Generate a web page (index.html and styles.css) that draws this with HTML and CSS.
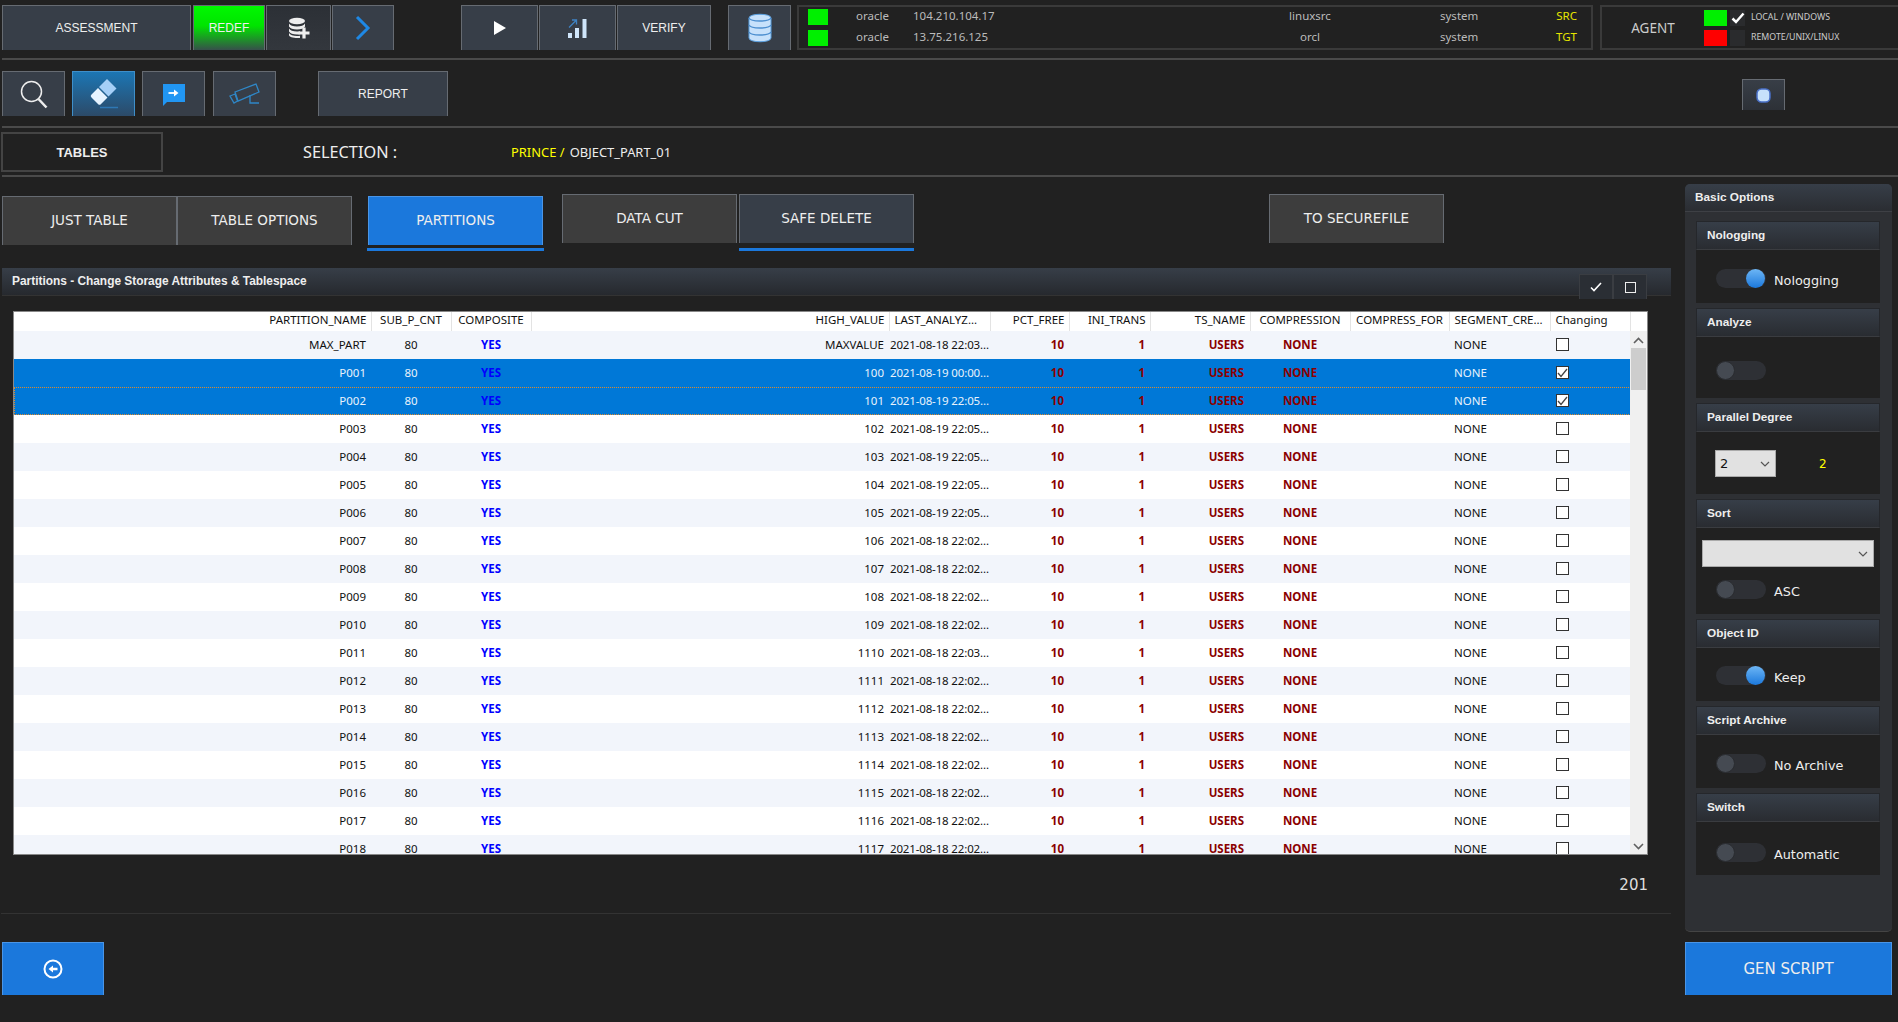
FILE: index.html
```html
<!DOCTYPE html>
<html lang="en">
<head>
    <meta charset="UTF-8">
    <meta name="viewport" content="width=device-width, initial-scale=1.0">
    <title>Redef - Partitions</title>
    <link rel="stylesheet" href="styles.css">
</head>
<body>
    <!-- top toolbar -->
    <div class="toolbar top-bar">
        <button class="tool w-assess">ASSESSMENT</button>
        <button class="tool tool-green w-redef">REDEF</button>
        <button class="tool tool-dark w-db">
            <svg width="22" height="22" viewBox="0 0 22 22">
                <ellipse cx="9" cy="4" rx="8" ry="3.2" fill="#eee"/>
                <path d="M1 6.5c1 2 4 3 8 3s7-1 8-3v3c-1 2-4 3-8 3s-7-1-8-3z" fill="#eee"/>
                <path d="M1 11.5c1 2 4 3 8 3 1 0 2 0 3-.2v3c-1 .2-2 .2-3 .2-4 0-7-1-8-3z" fill="#eee"/>
                <path d="M1 16c1 2 4 3 8 3 1 0 2 0 3-.2V21c-6 .5-11-1-11-3z" fill="#eee"/>
                <path d="M16 10.500v11M10.500 16h11" stroke="#eee" stroke-width="3.200"/>
            </svg>
        </button>
        <button class="tool w-next">
            <svg width="16" height="26" viewBox="0 0 16 26"><path d="M2 2l11 11L2 24" fill="none" stroke="#1e88e5" stroke-width="3"/></svg>
        </button>
        <button class="tool w-play gap-run">
            <svg width="14" height="14" viewBox="0 0 14 14"><path d="M1 0l12 7-12 7z" fill="#fff"/></svg>
        </button>
        <button class="tool w-play">
            <svg width="21" height="20" viewBox="0 0 21 20">
                <path d="M1 15h4v5H1zM8 10h4v10H8zM15.500 1h4v19h-4z" fill="#cfe5fa"/>
                <path d="M2 9.500l7-7M5 2h4.500v4.500" fill="none" stroke="#3f83c4" stroke-width="1.300"/>
            </svg>
        </button>
        <button class="tool w-verify">VERIFY</button>
        <button class="tool w-dbbig gap-db">
            <svg width="24" height="30" viewBox="0 0 24 30">
                <path d="M1 5c0-5 22-5 22 0v20c0 5-22 5-22 0z" fill="#c7e1fb" stroke="#5aa0e0"/>
                <path d="M1 5c2 4 20 4 22 0M1 12c2 4 20 4 22 0M1 19c2 4 20 4 22 0" fill="none" stroke="#4d8fd0" stroke-width="1.500"/>
            </svg>
        </button>

        <div class="conn-panel">
            <div class="conn-row">
                <span class="led led-green"></span>
                <span class="c-type">oracle</span>
                <span class="c-ip">104.210.104.17</span>
                <span class="c-sid">linuxsrc</span>
                <span class="c-user">system</span>
                <span class="c-tag">SRC</span>
            </div>
            <div class="conn-row">
                <span class="led led-green"></span>
                <span class="c-type">oracle</span>
                <span class="c-ip">13.75.216.125</span>
                <span class="c-sid">orcl</span>
                <span class="c-user">system</span>
                <span class="c-tag">TGT</span>
            </div>
        </div>

        <div class="agent-panel">
            <span class="agent-title">AGENT</span>
            <div class="agent-rows">
                <div class="agent-row">
                    <span class="agent-led led-green"></span>
                    <span class="agent-check">
                        <svg width="14" height="12" viewBox="0 0 14 12"><path d="M1.500 6.500l3.500 3.500L12.500 1.500" fill="none" stroke="#fff" stroke-width="2.500"/></svg>
                    </span>
                    <span class="agent-label">LOCAL / WINDOWS</span>
                </div>
                <div class="agent-row">
                    <span class="agent-led led-red"></span>
                    <span class="agent-check"></span>
                    <span class="agent-label">REMOTE/UNIX/LINUX</span>
                </div>
            </div>
        </div>
    </div>
    <div class="sep sep-top"></div>

    <!-- second toolbar -->
    <div class="toolbar second-bar">
        <button class="tool w-icon">
            <svg width="28" height="29" viewBox="0 0 28 29">
                <circle cx="11.500" cy="11.500" r="10" fill="none" stroke="#eee" stroke-width="1.500"/>
                <path d="M18.500 19l8 8.500" stroke="#eee" stroke-width="2.500"/>
            </svg>
        </button>
        <button class="tool tool-active w-icon gap-s">
            <svg width="30" height="32" viewBox="0 0 30 32">
                <path d="M18 1l9.500 9.500-8 8L10 9z" fill="#a5cff7"/>
                <path d="M9 10l9.500 9.500-6.500 6.500a2 2 0 0 1-3 0L2.500 19.500a2 2 0 0 1 0-3z" fill="#e6f3ff"/>
                <path d="M11 29.500h18" stroke="#2e78b5" stroke-width="1.500"/>
            </svg>
        </button>
        <button class="tool w-icon gap-s">
            <svg width="23" height="23" viewBox="0 0 23 23">
                <path d="M1 1h22v18H5l-4 4z" fill="#2196f3"/>
                <path d="M6.500 10h7" stroke="#fff" stroke-width="1.800"/>
                <path d="M12 6.500l4.500 3.500-4.500 3.500z" fill="#fff"/>
            </svg>
        </button>
        <button class="tool w-icon gap-m">
            <svg width="31" height="23" viewBox="0 0 31 23" fill="none" stroke="#2f87c7" stroke-width="1.300">
                <path d="M6 9L27 1l3 8-21 9z"/>
                <path d="M1 13l5-2 2.500 7-3.500 2z"/>
                <path d="M21 12v8h9"/>
            </svg>
        </button>
        <button class="tool w-report gap-report">REPORT</button>
        <button class="tool w-small">
            <svg width="15" height="15" viewBox="0 0 15 15"><rect x="1" y="1" width="13" height="13" rx="4.500" fill="#c7e1fb" stroke="#4a70c8" stroke-width="1.500"/></svg>
        </button>
    </div>
    <div class="sep sep-second"></div>

    <div class="selection-row">
        <div class="tables-box">TABLES</div>
        <span class="selection-label">SELECTION :</span>
        <span class="selection-path"><span class="owner">PRINCE /</span> OBJECT_PART_01</span>
    </div>
    <div class="sep sep-third"></div>

    <div class="main">
        <div class="content">
            <div class="tabs">
                <div class="tab-group">
                    <button class="tab">JUST TABLE</button>
                    <button class="tab">TABLE OPTIONS</button>
                </div>
                <div class="tab-group tab-group-low">
                    <div class="tab-col">
                        <button class="tab tab-on">PARTITIONS</button>
                        <div class="tab-line tab-line-wide"></div>
                    </div>
                </div>
                <button class="tab tab-up tab-cut">DATA CUT</button>
                <div class="tab-col tab-col-safe">
                    <button class="tab tab-up tab-slate">SAFE DELETE</button>
                    <div class="tab-line"></div>
                </div>
                <button class="tab tab-up tab-secure">TO SECUREFILE</button>
            </div>

            <div class="panel-head">
                <span class="panel-title">Partitions - Change Storage Attributes &amp; Tablespace</span>
                <div class="panel-btns">
                    <button class="mini-btn">
                        <svg width="12" height="10" viewBox="0 0 12 10"><path d="M1 5.500l3 3L11 1" fill="none" stroke="#fff" stroke-width="1.600"/></svg>
                    </button>
                    <button class="mini-btn"><span class="mini-box"></span></button>
                </div>
            </div>

            <div class="grid-wrap">
                <table class="grid">
                    <colgroup>
                        <col class="c357"><col class="c80"><col class="c80"><col class="c358"><col class="c101"><col class="c79"><col class="c81"><col class="c100"><col class="c100"><col class="c99"><col class="c101"><col class="c80"><col class="c17">
                    </colgroup>
                    <thead>
                        <tr>
                            <th class="right">PARTITION_NAME</th>
                            <th>SUB_P_CNT</th>
                            <th>COMPOSITE</th>
                            <th class="right">HIGH_VALUE</th>
                            <th class="left">LAST_ANALYZ...</th>
                            <th class="right">PCT_FREE</th>
                            <th class="right">INI_TRANS</th>
                            <th class="right">TS_NAME</th>
                            <th>COMPRESSION</th>
                            <th>COMPRESS_FOR</th>
                            <th class="left">SEGMENT_CRE...</th>
                            <th class="left">Changing</th>
                            <th class="no-line"></th>
                        </tr>
                    </thead>
                    <tbody id="gridBody"></tbody>
                </table>
                <div class="scrollbar">
                    <svg class="arrow" width="11" height="7" viewBox="0 0 11 7"><path d="M1 6l4.500-4.500L10 6" fill="none" stroke="#606060" stroke-width="1.600"/></svg>
                    <div class="thumb"></div>
                    <svg class="arrow arrow-down" width="11" height="7" viewBox="0 0 11 7"><path d="M1 1l4.500 4.500L10 1" fill="none" stroke="#606060" stroke-width="1.600"/></svg>
                </div>
            </div>

            <div class="count">201</div>
            <div class="foot-line"></div>
            <button class="action back-btn">
                <svg width="20" height="20" viewBox="0 0 20 20">
                    <circle cx="10" cy="10" r="8.500" fill="none" stroke="#fff" stroke-width="2"/>
                    <path d="M5.500 10L10 6.500v2.300h4.500v2.400H10v2.300z" fill="#fff"/>
                </svg>
            </button>
        </div>

        <div class="side">
            <div class="side-panel">
                <div class="side-head">Basic Options</div>
                <div class="sections">
                    <div class="section">
                        <div class="sec-head">Nologging</div>
                        <div class="sec-body">
                            <div class="switch-row"><span class="toggle on"><i></i></span><span class="switch-text">Nologging</span></div>
                        </div>
                    </div>
                    <div class="section">
                        <div class="sec-head">Analyze</div>
                        <div class="sec-body body-analyze">
                            <div class="switch-row"><span class="toggle"><i></i></span></div>
                        </div>
                    </div>
                    <div class="section">
                        <div class="sec-head">Parallel Degree</div>
                        <div class="sec-body body-degree">
                            <div class="degree-row">
                                <div class="select select-small">2
                                    <svg width="10" height="6" viewBox="0 0 10 6"><path d="M1 1l4 4 4-4" fill="none" stroke="#555" stroke-width="1.200"/></svg>
                                </div>
                                <span class="degree-val">2</span>
                            </div>
                        </div>
                    </div>
                    <div class="section">
                        <div class="sec-head">Sort</div>
                        <div class="sec-body body-sort">
                            <div class="select select-wide">
                                <svg width="10" height="6" viewBox="0 0 10 6"><path d="M1 1l4 4 4-4" fill="none" stroke="#555" stroke-width="1.200"/></svg>
                            </div>
                            <div class="switch-row"><span class="toggle"><i></i></span><span class="switch-text">ASC</span></div>
                        </div>
                    </div>
                    <div class="section">
                        <div class="sec-head">Object ID</div>
                        <div class="sec-body body-object">
                            <div class="switch-row"><span class="toggle on"><i></i></span><span class="switch-text">Keep</span></div>
                        </div>
                    </div>
                    <div class="section">
                        <div class="sec-head">Script Archive</div>
                        <div class="sec-body">
                            <div class="switch-row"><span class="toggle"><i></i></span><span class="switch-text">No Archive</span></div>
                        </div>
                    </div>
                    <div class="section">
                        <div class="sec-head">Switch</div>
                        <div class="sec-body body-switch">
                            <div class="switch-row"><span class="toggle"><i></i></span><span class="switch-text">Automatic</span></div>
                        </div>
                    </div>
                </div>
            </div>
            <button class="action gen-btn">GEN SCRIPT</button>
        </div>
    </div>

    <script>
        const rows = [
            ['MAX_PART', 'MAXVALUE', '2021-08-18 22:03...'],
            ['P001', '100', '2021-08-19 00:00...'],
            ['P002', '101', '2021-08-19 22:05...'],
            ['P003', '102', '2021-08-19 22:05...'],
            ['P004', '103', '2021-08-19 22:05...'],
            ['P005', '104', '2021-08-19 22:05...'],
            ['P006', '105', '2021-08-19 22:05...'],
            ['P007', '106', '2021-08-18 22:02...'],
            ['P008', '107', '2021-08-18 22:02...'],
            ['P009', '108', '2021-08-18 22:02...'],
            ['P010', '109', '2021-08-18 22:02...'],
            ['P011', '1110', '2021-08-18 22:03...'],
            ['P012', '1111', '2021-08-18 22:02...'],
            ['P013', '1112', '2021-08-18 22:02...'],
            ['P014', '1113', '2021-08-18 22:02...'],
            ['P015', '1114', '2021-08-18 22:02...'],
            ['P016', '1115', '2021-08-18 22:02...'],
            ['P017', '1116', '2021-08-18 22:02...'],
            ['P018', '1117', '2021-08-18 22:02...']
        ];

        const checkMark = '<svg width="11" height="10" viewBox="0 0 11 10"><path d="M1 5l3 3.500L10 1" fill="none" stroke="#444" stroke-width="1.300"/></svg>';

        document.getElementById('gridBody').innerHTML = rows.map((row, index) => {
            const selected = index === 1 || index === 2;
            const cls = (selected ? 'sel ' : '') + (index === 2 ? 'focus ' : '') + (index % 2 === 0 ? 'alt' : '');
            return `
                <tr class="${cls}">
                    <td class="right name">${row[0]}</td>
                    <td>80</td>
                    <td class="yes">YES</td>
                    <td class="right">${row[1]}</td>
                    <td class="date">${row[2]}</td>
                    <td class="right red">10</td>
                    <td class="right red">1</td>
                    <td class="right red ts">USERS</td>
                    <td class="red">NONE</td>
                    <td></td>
                    <td class="left">NONE</td>
                    <td class="left"><span class="check">${selected ? checkMark : ''}</span></td>
                    <td class="filler"></td>
                </tr>`;
        }).join('');
    </script>
</body>
</html>
```

FILE: styles.css
```css
:root {
    --bg: #212121;
    --slate: #373e48;
    --line: #4a4a4a;
    --blue: #1b78dc;
    --edge: #666b72;
}

* {
    margin: 0;
    padding: 0;
    box-sizing: border-box;
}

html, body {
    height: 1022px;
    overflow: hidden;
}

body {
    background: var(--bg);
    color: #eee;
    font-family: "Liberation Sans", Arial, sans-serif;
    font-size: 12px;
}

button {
    font-family: inherit;
    color: inherit;
    cursor: pointer;
}

/* toolbars */
.toolbar {
    display: flex;
    height: 45px;
}

.top-bar {
    margin-top: 5px;
    padding-left: 2px;
}

.second-bar {
    margin-top: 11px;
    padding-left: 2px;
}

.tool {
    height: 45px;
    display: flex;
    align-items: center;
    justify-content: center;
    font-size: 12px;
    background: var(--slate);
    border: 1px solid var(--edge);
    border-bottom: 0;
    margin-right: 1px;
    flex: none;
}

.tool-green {
    background: linear-gradient(#00f800 0%, #00e400 45%, #36504a 100%);
}

.tool-dark {
    background: linear-gradient(#2c3036, #33373d);
}

.tool-active {
    background: linear-gradient(#1c76b4, #2c4a68);
    border-color: #3f8fc9;
}

.w-assess { width: 189px; margin-right: 2px; }
.w-redef { width: 72px; }
.w-db { width: 65px; }
.w-next { width: 62px; }
.w-play { width: 77px; }
.w-verify { width: 94px; }
.w-dbbig { width: 63px; }
.w-icon { width: 63px; }
.w-report { width: 130px; }
.w-small { width: 43px; height: 31px; margin: 8px 0 0 1293px; background: linear-gradient(#383e47, #2d3137); }

.gap-run { margin-left: 66px; }
.gap-db { margin-left: 16px; }
.gap-s { margin-left: 6px; }
.gap-m { margin-left: 7px; }
.gap-report { margin-left: 41px; }

/* connection panel */
.conn-panel {
    width: 796px;
    height: 45px;
    margin-left: 5px;
    border: 2px solid #3a3a3a;
    padding-left: 9px;
    font-family: "Noto Sans", sans-serif;
    font-size: 11.500px;
    color: #bbb;
}

.conn-row {
    display: grid;
    grid-template-columns: 20px 58px 359px 130px 116px 1fr;
    align-items: center;
    height: 20px;
    margin-bottom: 1px;
}

.conn-row span:not(.led) {
    margin-bottom: 3px;
}

.led {
    width: 20px;
    height: 16px;
}

.led-green { background: #00f000; }
.led-red { background: #f00; }

.c-type { padding-left: 28px; white-space: nowrap; }
.c-ip { padding-left: 27px; }
.c-sid { text-align: center; }
.c-user { padding-left: 65px; }
.c-tag { color: #e6e600; text-align: right; padding-right: 14px; }

.agent-panel {
    flex: 1;
    display: flex;
    align-items: center;
    height: 45px;
    margin-left: 7px;
    border: 2px solid #3a3a3a;
    border-right: 0;
}

.agent-title {
    width: 102px;
    text-align: center;
    font-family: "Noto Sans", sans-serif;
    font-size: 13.500px;
    color: #ccc;
}

.agent-row {
    display: flex;
    align-items: center;
    height: 20px;
}

.agent-led {
    width: 23px;
    height: 16px;
}

.agent-check {
    width: 15px;
    height: 16px;
    margin-left: 3px;
    background: #2a2b2d;
    display: flex;
    align-items: center;
    justify-content: center;
}

.agent-label {
    margin: 0 0 1px 6px;
    font-family: "Noto Sans", sans-serif;
    font-size: 8.800px;
    color: #ccc;
    white-space: nowrap;
}

.sep {
    height: 2px;
    margin-left: 2px;
    background: var(--line);
}

.sep-top { margin-top: 8px; }
.sep-second { margin-top: 10px; }
.sep-third { margin-top: 3px; }

/* selection line */
.selection-row {
    display: flex;
    align-items: center;
    height: 40px;
    margin-top: 4px;
    padding-left: 1px;
}

.tables-box {
    width: 162px;
    height: 40px;
    line-height: 38px;
    text-align: center;
    border: 2px solid #444;
    font-size: 13px;
    font-weight: bold;
}

.selection-label {
    margin-left: 140px;
    width: 208px;
    font-family: "Noto Sans", sans-serif;
    font-size: 16.300px;
}

.selection-path {
    font-family: "Noto Sans", sans-serif;
    font-size: 12.900px;
}

.owner {
    color: #ff0;
    margin-right: 2px;
}

/* main area */
.main {
    display: flex;
}

.content {
    width: 1671px;
}

.tabs {
    display: flex;
    margin-top: 17px;
    padding-left: 2px;
    height: 57px;
}

.tab-group {
    display: flex;
    margin-top: 2px;
}

.tab-group-low {
    margin-left: 15px;
}

.tab-col {
    display: flex;
    flex-direction: column;
    align-items: center;
}

.tab {
    width: 175px;
    height: 49px;
    padding-bottom: 2px;
    font-family: "DejaVu Sans", sans-serif;
    font-size: 13.500px;
    background: #3d3d3d;
    border: 1px solid var(--edge);
    border-bottom: 0;
    flex: none;
}

.tab-on {
    background: var(--blue);
    border-color: #4a95e6;
}

.tab-slate {
    background: var(--slate);
}

.tab-cut {
    margin-left: 18px;
    margin-right: 2px;
}

.tab-col-safe .tab-line {
    margin-top: 5px;
}

.tab-secure {
    width: 175px;
    margin-left: 355px;
}

.tab-line {
    width: 100%;
    height: 3px;
    margin-top: 3px;
    background: var(--blue);
}

.tab-line-wide {
    width: 177px;
}

.panel-head {
    display: flex;
    justify-content: space-between;
    height: 28px;
    margin: 17px 0 0 2px;
    padding-left: 10px;
    background: linear-gradient(#373e48, #26292e);
    border-bottom: 1px solid #333;
}

.panel-title {
    line-height: 27px;
    font-weight: bold;
    font-size: 11.900px;
}

.panel-btns {
    display: flex;
    margin: 6px 24px 0 0;
}

.mini-btn {
    width: 34px;
    height: 25px;
    display: flex;
    align-items: center;
    justify-content: center;
    background: #2a2e34;
    border: 1px solid #3a3d42;
    border-bottom: 0;
}

.mini-box {
    width: 11px;
    height: 11px;
    border: 1px solid #eee;
}

/* table */
.grid-wrap {
    position: relative;
    width: 1635px;
    height: 544px;
    margin: 15px 0 0 13px;
    overflow: hidden;
    background: #fff;
    border: 1px solid #888;
}

.grid {
    table-layout: fixed;
    width: 1633px;
    border-collapse: collapse;
    font-family: "Noto Sans", sans-serif;
    font-size: 11.500px;
    color: #111;
}

.c357 { width: 357px; }
.c358 { width: 358px; }
.c101 { width: 101px; }
.c100 { width: 100px; }
.c99 { width: 99px; }
.c81 { width: 81px; }
.c80 { width: 80px; }
.c79 { width: 79px; }
.c17 { width: 17px; }

.grid th {
    height: 19px;
    font-weight: normal;
    text-align: center;
    white-space: nowrap;
    overflow: hidden;
    padding: 0 4px 3px;
    line-height: 16px;
    border-right: 1px solid #e3e3e3;
}

.grid th.no-line { border-right: 0; }
.grid th.right { text-align: right; }
.grid th.left { text-align: left; padding-left: 5px; }

.grid td {
    height: 28px;
    padding: 0 5px 2px;
    text-align: center;
    white-space: nowrap;
}

.grid td.right { text-align: right; }
.grid td.left { text-align: left; }
.grid td.date { text-align: left; padding: 0 0 2px 1px; letter-spacing: -0.150px; }
.grid td.ts { padding-right: 6px; }

.grid .alt td { background: #f2f5fb; }
.grid .sel td { background: #0078d7; color: #e8f2fb; }
.grid .filler, .grid .alt .filler, .grid .sel .filler { background: #f0f0f0; }

.grid tr.focus {
    outline: 1px dotted #e08a2a;
    outline-offset: -1px;
}

.grid td.yes,
.grid .sel td.yes {
    color: #0000ff;
    font-weight: bold;
}

.grid td.red,
.grid .sel td.red {
    color: #8b0000;
    font-weight: bold;
}

.check {
    display: flex;
    align-items: center;
    justify-content: center;
    width: 13px;
    height: 13px;
    margin: 1px 0 0 1px;
    background: #fff;
    border: 1px solid #333;
}

.scrollbar {
    position: absolute;
    top: 19px;
    right: 0;
    width: 17px;
    bottom: 0;
    display: flex;
    flex-direction: column;
    align-items: center;
    padding-top: 6px;
    background: #f0f0f0;
}

.thumb {
    width: 15px;
    height: 42px;
    margin-top: 4px;
    background: #cdcdcd;
}

.arrow-down {
    margin-top: auto;
    margin-bottom: 4px;
}

.count {
    margin-top: 20px;
    padding-right: 23px;
    line-height: 20px;
    text-align: right;
    font-family: "DejaVu Sans", sans-serif;
    font-size: 15px;
    color: #ddd;
}

.foot-line {
    height: 1px;
    margin: 18px 0 0 1px;
    background: #333;
}

.action {
    height: 53px;
    display: flex;
    align-items: center;
    justify-content: center;
    background: var(--blue);
    border: 1px solid #4a95e6;
    border-bottom: 0;
}

.back-btn {
    width: 102px;
    margin: 28px 0 0 2px;
}

/* right column */
.side {
    width: 207px;
    margin: 7px 0 0 14px;
}

.side-panel {
    height: 748px;
    background: #2e3034;
    border-radius: 5px;
    border-bottom: 1px solid #444;
}

.side-head {
    height: 28px;
    line-height: 26px;
    padding-left: 10px;
    font-weight: bold;
    font-size: 11.800px;
    background: linear-gradient(#373e48, #2a2d32);
    border-bottom: 1px solid #3e4045;
    border-radius: 5px 5px 0 0;
}

.sections {
    display: flex;
    flex-direction: column;
    gap: 5px;
    padding: 9px 12px 0 11px;
}

.section {
    background: var(--bg);
}

.sec-head {
    height: 29px;
    line-height: 27px;
    padding-left: 10px;
    font-weight: bold;
    font-size: 11.800px;
    background: linear-gradient(#373e48, #292c31);
    border: 1px solid #25272b;
    border-bottom: 1px solid #3a3c40;
}

.sec-body {
    padding: 19px 0 15px 20px;
}

.body-analyze { padding: 24px 0 18px 20px; }
.body-degree { padding: 18px 0 17px 19px; }
.body-sort { padding: 12px 0 15px 6px; }
.body-object { padding: 18px 0 16px 20px; }
.body-switch { padding: 21px 0 13px 20px; }

.body-sort .switch-row {
    margin: 13px 0 0 14px;
}

.switch-row {
    display: flex;
    align-items: center;
    height: 19px;
}

.toggle {
    display: block;
    width: 50px;
    height: 19px;
    border-radius: 10px;
    background: #2e3035;
    flex: none;
}

.toggle i {
    display: block;
    width: 19px;
    height: 19px;
    border-radius: 50%;
    background: #454a52;
    border: 1px solid #2a2c30;
}

.toggle.on i {
    margin-left: 30px;
    background: linear-gradient(#6db6f5, #1b78dc);
    border: 0;
}

.switch-text {
    margin: 4px 0 0 8px;
    font-family: "DejaVu Sans", sans-serif;
    font-size: 12.800px;
    white-space: nowrap;
}

.degree-row {
    display: flex;
    align-items: center;
}

.select {
    height: 27px;
    display: flex;
    align-items: center;
    justify-content: space-between;
    padding: 0 5px 0 4px;
    background: #e1e1e1;
    border: 1px solid #aaa;
    color: #111;
    font-family: "DejaVu Sans", sans-serif;
    font-size: 13px;
}

.select-small { width: 61px; }

.select-wide {
    width: 172px;
    justify-content: flex-end;
}

.degree-val {
    margin-left: 43px;
    color: #ff0;
    font-family: "DejaVu Sans", sans-serif;
    font-size: 12px;
}

.gen-btn {
    width: 207px;
    margin-top: 10px;
    font-family: "DejaVu Sans", sans-serif;
    font-size: 15px;
}
```
